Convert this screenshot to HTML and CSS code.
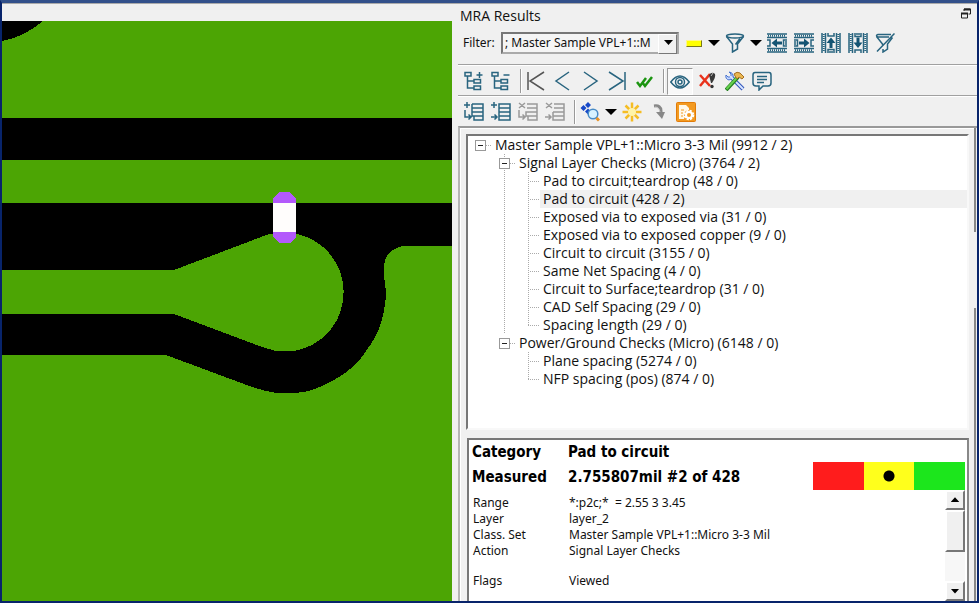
FILE: index.html
```html
<!DOCTYPE html>
<html lang="en">
<head>
<meta charset="utf-8">
<title>MRA Results</title>
<link rel="stylesheet" href="styles.css">
</head>
<body>
<main class="window">
  <section class="viewer" aria-label="Layer view">
    <div class="viewer-head"></div>
    <svg class="board" viewBox="2 21 450 580" preserveAspectRatio="xMinYMin slice" shape-rendering="crispEdges">
      <rect x="2" y="21" width="450" height="580" fill="#4ca504"/>
      <path d="M2 21H43Q24 37 2 41Z"/>
      <rect x="2" y="118" width="450" height="42"/>
      <path d="M2 203H452V246H402Q388 250 385 260Q383 267 384.500 280L386 292Q386 305 381 323Q376 338 366 351Q359 362 350 369Q342 376 330 382Q317 389 304 392Q290 394 277 393Q264 391 252 387L166 355H2Z"/>
      <path d="M2 270H174L265 235.500Q275 232 290 233A59 59 0 0 1 343.500 290A59 59 0 0 1 296 350.500H274L262 347L174 314H2Z" fill="#4ca504"/>
      <path d="M273 203V199L279 192H289L296 199V203ZM273 232H296V237L290 243H279L273 237Z" fill="#b359fb"/>
      <rect x="273" y="203" width="23" height="29" fill="#fffdfc"/>
    </svg>
  </section>

  <section class="panel">
    <header class="titlebar">
      <h1>MRA Results</h1>
      <button class="float" aria-label="Float panel"><svg width="10" height="11" viewBox="0 0 10 11"><path d="M3 3V1H9.500V6H7.500" fill="none" stroke="#222"/><path d="M3 1.500H9.500M0 5.500H7" stroke="#222" stroke-width="2"/><path d="M.5 5V10H6.500V5" fill="none" stroke="#222"/></svg></button>
    </header>

    <div class="toolbar filterbar">
      <label for="filter">Filter:</label>
      <span class="combo"><select id="filter"><option>; Master Sample VPL+1::M</option></select></span>
      <button class="swatch" aria-label="Colour"></button>
      <button class="caret" aria-label="Colour options"></button>
      <button class="tool" aria-label="Filter"><svg class="blue" viewBox="0 0 20 20"><ellipse cx="10" cy="3" rx="8.500" ry="2"/><path d="M1.500 3.500L7.500 11V19L12.500 16V11L18.500 3.500M10.500 11.500L15 5.500"/></svg></button>
      <button class="caret" aria-label="Filter options"></button>
      <button class="tool" aria-label="Previous column"><svg class="blue" viewBox="0 0 20 20"><path d="M0 1H20M0 4.500H20M0 15.500H20M0 19H20"/><path d="M1 2.750H19M1 17.250H19" stroke-width="2" stroke-dasharray="1 1"/><path d="M0 7H3V13H0M20 7H16.500V13H20M18 9H20M18 11H20"/><path class="solid" d="M4.500 10L10 5.500V8.500H15V11.500H10V14.500Z"/></svg></button>
      <button class="tool" aria-label="Next column"><svg class="blue" viewBox="0 0 20 20"><path d="M0 1H20M0 4.500H20M0 15.500H20M0 19H20"/><path d="M1 2.750H19M1 17.250H19" stroke-width="2" stroke-dasharray="1 1"/><path d="M0 7H3.500V13H0M20 7H17V13H20M0 9H2M0 11H2"/><path class="solid" d="M15.500 10L10 5.500V8.500H5V11.500H10V14.500Z"/></svg></button>
      <button class="tool" aria-label="Previous row"><svg class="blue" viewBox="0 0 20 20"><path d="M1 0V20M4.500 0V20M15.500 0V20M19 0V20"/><path d="M2.750 1V19M17.250 1V19" stroke-width="2" stroke-dasharray="1 1"/><path d="M7 0V3H13V0M7 20V16.500H13V20M9 18V20M11 18V20"/><path class="solid" d="M10 4.500L14.500 10H11.500V15H8.500V10H5.500Z"/></svg></button>
      <button class="tool" aria-label="Next row"><svg class="blue" viewBox="0 0 20 20"><path d="M1 0V20M4.500 0V20M15.500 0V20M19 0V20"/><path d="M2.750 1V19M17.250 1V19" stroke-width="2" stroke-dasharray="1 1"/><path d="M7 0V3.500H13V0M7 20V17H13V20M9 0V2M11 0V2"/><path class="solid" d="M10 15L14.500 9.500H11.500V4.500H8.500V9.500H5.500Z"/></svg></button>
      <button class="tool" aria-label="Clear filter"><svg class="blue" viewBox="0 0 20 20"><path d="M16 1.500H3Q0 2.500 3 4H14M1.500 3.500L7.500 11V13M8 16V19L12.500 16V11L17.500 4.500M19.500 .5L2 18.500"/></svg></button>
    </div>

    <div class="toolbar">
      <button class="tool" aria-label="Expand all"><svg class="blue" viewBox="0 0 20 20"><path d="M1 1.500H7V5H1ZM3.500 5V17H10M3.500 10H10M10 8.500H16.500V12H10ZM10 15H16.500V18.500H10Z"/><path d="M15.500 1V7M12.500 4H18.500"/></svg></button>
      <button class="tool" aria-label="Collapse all"><svg class="blue" viewBox="0 0 20 20"><path d="M1 1.500H7V5H1ZM3.500 5V17H10M3.500 10H10M10 8.500H16.500V12H10ZM10 15H16.500V18.500H10ZM12.500 4H18.500"/></svg></button>
      <span class="sep"></span>
      <button class="tool" aria-label="First"><svg class="dark" viewBox="0 0 20 20"><path d="M2 1V19M18 1L4 10L18 19"/></svg></button>
      <button class="tool" aria-label="Previous"><svg class="blue" viewBox="0 0 20 20"><path d="M16 1L3 10L16 19"/></svg></button>
      <button class="tool" aria-label="Next"><svg class="blue" viewBox="0 0 20 20"><path d="M4 1L17 10L4 19"/></svg></button>
      <button class="tool" aria-label="Last"><svg class="blue" viewBox="0 0 20 20"><path d="M2 1L16 10L2 19M18 1V19"/></svg></button>
      <button class="tool" aria-label="Accept"><svg viewBox="0 0 20 20" fill="none" stroke="#1b9410" stroke-width="2.500"><path d="M3 11L6 15L12 7M8 11L11 15L18 6"/></svg></button>
      <span class="sep"></span>
      <button class="tool pressed" aria-label="Show viewed" aria-pressed="true"><svg class="blue" viewBox="0 0 20 20"><path d="M.8 11Q10-1 19.200 11Q10 23 .8 11Z"/><circle cx="10" cy="11" r="4.500"/><circle cx="10" cy="11" r="2"/></svg></button>
      <button class="tool" aria-label="Reject"><svg viewBox="0 0 20 20"><path d="M2 4L12 15M12 3L2 15" stroke="#e9321c" stroke-width="2.500" fill="none"/><path d="M11 4Q14 0 17 3Q18 6 14 12L13 12Z" fill="#383838"/><path d="M13 5L15 2" stroke="#bbb"/><circle cx="14" cy="15.500" r="1.700" fill="#333"/></svg></button>
      <button class="tool" aria-label="Tools"><svg viewBox="0 0 20 20" fill="none"><path d="M5 5L18 18" stroke="#3156bc" stroke-width="4"/><path d="M4 1L6 3V6L3 6L1 4Q0 8 4 9L8 7L8 4Q7 1 4 1Z" fill="#c4d7ff" stroke="#4772cf"/><path d="M5 5L18 18" stroke="#d8e5ff" stroke-width="2"/><path d="M1 19L13 6" stroke="#257f20" stroke-width="4"/><path d="M1.500 18L13 5.500" stroke="#66d14e" stroke-width="2"/><path d="M9 3Q12 0 15 2L19 6L17 8L14 6L12 8L10 5Z" fill="#e9b752" stroke="#a66e22"/></svg></button>
      <button class="tool" aria-label="Comment"><svg class="blue" viewBox="0 0 20 20"><path d="M3 1.500H17Q19 1.500 19 4V12Q19 15 16 15H11L7 19V15H4Q1 15 1 12V4Q1 1.500 3 1.500ZM5 5.500H15M5 8.500H15M5 11.500H12"/></svg></button>
    </div>

    <div class="toolbar">
      <button class="tool" aria-label="Add group"><svg class="blue" viewBox="0 0 20 20"><path d="M3 0V6M0 3H6M1 8V15H7M4.500 12.500L7 15L4.500 17.500M8 2H19V18H10V14H8V10H19M8 2V10M8 6H19M10 14H19"/></svg></button>
      <button class="tool" aria-label="Add row"><svg class="blue" viewBox="0 0 20 20"><path d="M3 0V6M0 3H6M0 15H6M3.500 12.500L6 15L3.500 17.500M8 2H19V18H8ZM8 6H19M8 10H19M8 14H19"/></svg></button>
      <button class="tool" aria-label="Remove group" disabled><svg class="gray" viewBox="0 0 20 20"><path d="M1 1L7 6M7 1L1 6M1 8V15H7M4.500 12.500L7 15L4.500 17.500M9 2H19V18H10V14H8V10H19M9 6H19M10 14H19"/></svg></button>
      <button class="tool" aria-label="Remove row" disabled><svg class="gray" viewBox="0 0 20 20"><path d="M1 1L7 6M7 1L1 6M0 15H6M3.500 12.500L6 15L3.500 17.500M9 2H19V18H8V10M9 6H19M8 10H19M8 14H19"/></svg></button>
      <span class="sep"></span>
      <button class="tool" aria-label="Locate"><svg viewBox="0 0 20 20"><path d="M3.500 3L6.500 6L3.500 9L.5 6ZM8 0L11 3L8 6L5 3ZM8 6.500L11 9.500L8 12.500L5 9.500Z" fill="#1749c8"/><circle cx="13" cy="12" r="4.800" fill="#d7f2ff" stroke="#488bc6" stroke-width="1.500"/><path d="M16.500 16L19 18.500" stroke="#e79122" stroke-width="3"/></svg></button>
      <button class="caret" aria-label="Locate options"></button>
      <button class="tool" aria-label="Highlight"><svg viewBox="0 0 20 20"><path d="M10 .5V19.500M.5 10H19.500M3.500 3.500L16.500 16.500M16.500 3.500L3.500 16.500" stroke="#f5bd24" stroke-width="2.500"/><circle cx="10" cy="10" r="4" fill="#fff4a8"/></svg></button>
      <button class="tool" aria-label="Step" disabled><svg viewBox="0 0 20 20"><path d="M5 4Q12 3 12 9V11" fill="none" stroke="#888" stroke-width="3"/><path d="M6 5Q10 5 11 10" fill="none" stroke="#ccc"/><path d="M7 10H16L13 17Z" fill="#888"/></svg></button>
      <button class="tool" aria-label="Report settings"><svg viewBox="0 0 20 20"><rect x=".5" y=".5" width="19" height="19" rx="1" fill="#f39a21" stroke="#e17b08"/><path d="M3 3H10L13 6V8H11L8 11V17H3Z" fill="#fff8e8"/><path d="M5 8H8M5 11H7M5 14H7" stroke="#f39a21"/><circle cx="13" cy="13" r="4.300" fill="none" stroke="#fff" stroke-width="2" stroke-dasharray="2.200 1.180"/><circle cx="13" cy="13" r="3" fill="#f39a21" stroke="#fff" stroke-width="2"/></svg></button>
    </div>

    <div class="frame">
      <div class="stack">
        <nav class="tree" aria-label="Results">
          <ul>
            <li>
              <div class="node"><button class="toggle" aria-label="Collapse"></button><span>Master Sample VPL+1::Micro 3-3 Mil (9912 / 2)</span></div>
              <ul class="groups">
                <li class="linked">
                  <div class="node"><button class="toggle" aria-label="Collapse"></button><span>Signal Layer Checks (Micro) (3764 / 2)</span></div>
                  <ul class="leaves">
                    <li><span>Pad to circuit;teardrop (48 / 0)</span></li>
                    <li><span class="selected">Pad to circuit (428 / 2)</span></li>
                    <li><span>Exposed via to exposed via (31 / 0)</span></li>
                    <li><span>Exposed via to exposed copper (9 / 0)</span></li>
                    <li><span>Circuit to circuit (3155 / 0)</span></li>
                    <li><span>Same Net Spacing (4 / 0)</span></li>
                    <li><span>Circuit to Surface;teardrop (31 / 0)</span></li>
                    <li><span>CAD Self Spacing (29 / 0)</span></li>
                    <li><span>Spacing length (29 / 0)</span></li>
                  </ul>
                </li>
                <li>
                  <div class="node"><button class="toggle" aria-label="Collapse"></button><span>Power/Ground Checks (Micro) (6148 / 0)</span></div>
                  <ul class="leaves">
                    <li><span>Plane spacing (5274 / 0)</span></li>
                    <li><span>NFP spacing (pos) (874 / 0)</span></li>
                  </ul>
                </li>
              </ul>
            </li>
          </ul>
        </nav>

        <section class="details" aria-label="Details">
          <div class="summary">
            <table>
              <tr><th>Category</th><td>Pad to circuit</td></tr>
              <tr><th>Measured</th><td>2.755807mil #2 of 428</td></tr>
            </table>
            <div class="levels"><i class="red"></i><i class="yellow"></i><i class="green"></i></div>
          </div>
          <div class="facts">
            <table>
              <tr><th>Range</th><td>*:p2c;*&nbsp; = 2.55 3 3.45</td></tr>
              <tr><th>Layer</th><td>layer_2</td></tr>
              <tr><th>Class. Set</th><td>Master Sample VPL+1::Micro 3-3 Mil</td></tr>
              <tr><th>Action</th><td>Signal Layer Checks</td></tr>
              <tr class="spaced"><th>Flags</th><td>Viewed</td></tr>
            </table>
            <div class="scroll">
              <button class="up" aria-label="Scroll up"></button>
              <span class="thumb"></span>
              <button class="down" aria-label="Scroll down"></button>
            </div>
          </div>
        </section>
      </div>
      <div class="rail"><i></i><i></i></div>
    </div>
  </section>
</main>
</body>
</html>
```
FILE: styles.css
```css
* { box-sizing: border-box; }
body { margin: 0; color: #111; font: 12px/16px "Noto Sans", sans-serif; }
ul { list-style: none; margin: 0; padding: 0; }
button { padding: 0; border: 0; background: none; flex: none; }
table { border-collapse: collapse; }
th, td { padding: 0; text-align: left; white-space: pre; }

.window {
  display: grid;
  grid-template-columns: 450fr 525fr;
  height: 100vh;
  border: 2px solid #08246b;
  border-top: 3px solid #32508a;
  background: #f0f0f0;
  overflow: hidden;
}
.viewer { display: flex; flex-direction: column; min-width: 0; min-height: 0; }
.viewer-head { height: 18px; flex: none; border-top: 1px solid #aaa; }
.board { display: block; width: 100%; flex: 1; min-height: 0; }

.panel { display: flex; flex-direction: column; min-width: 0; min-height: 0; padding-left: 6px; border-top: 1px solid #aaa; }
.titlebar { display: flex; justify-content: space-between; align-items: center; height: 23px; flex: none; padding: 0 6px 0 2px; }
.titlebar h1 { margin: 0; font: 14px/20px "Open Sans", sans-serif; }
.float { display: flex; height: 16px; }

.toolbar { display: flex; align-items: center; gap: 3px; height: 31px; flex: none; padding: 2px 0 0 4px; border-top: 1px solid #a0a0a0; box-shadow: inset 0 1px #fff; }
.filterbar { height: 37px; padding: 0 0 5px 5px; border-top: 0; box-shadow: none; }
.filterbar label { width: 35px; }
.tool { display: grid; place-items: center; width: 24px; height: 26px; }
.tool svg { width: 20px; height: 20px; }
.pressed { height: 27px; width: 26px; border: 1px solid #999; border-color: #999 #fff #fff #999; background: #f8f8f8; }
.blue { fill: none; stroke: #28647f; stroke-width: 1.500; }
.dark { fill: none; stroke: #555; stroke-width: 1.500; }
.gray { fill: none; stroke: #999; stroke-width: 1.500; }
.solid { fill: #145473; stroke: none; }
.sep { width: 2px; height: 24px; margin: 0 -1px 0 4px; border-left: 1px solid #999; border-right: 1px solid #fff; }
.caret { width: 12px; height: 6px; background: #000; clip-path: polygon(0 0, 100% 0, 50% 100%); }
.swatch { width: 16px; height: 7px; margin: 0 3px 0 4px; background: #ff0; border: 1px solid #8a8a20; border-color: #fff68a #77771c #77771c #fff68a; }

.combo { display: flex; position: relative; width: 178px; height: 22px; border: 2px solid #777; border-color: #777 #aaa #aaa #777; background: #fff; }
.combo select { appearance: none; width: 100%; padding: 0 18px 0 2px; border: 0; background: #f5f5f5; color: #111; font: inherit; }
.combo::before { content: ""; position: absolute; top: 0; right: 0; width: 17px; height: 18px; background: #f0f0f0; border: 1px solid #fff; border-right-color: #777; border-bottom-color: #777; pointer-events: none; }
.combo::after { content: ""; position: absolute; top: 6px; right: 4px; width: 9px; height: 5px; background: #000; clip-path: polygon(0 0, 100% 0, 50% 100%); pointer-events: none; }

.frame { display: flex; flex: 1; min-height: 0; border-top: 2px solid #999; border-left: 2px solid #b5b5b5; }
.stack { display: flex; flex-direction: column; flex: 1; min-width: 0; gap: 8px; padding: 6px 5px 0 6px; box-shadow: inset 1px 1px #fff; }
.rail { display: flex; flex-direction: column; justify-content: space-between; width: 3px; }
.rail i { width: 2px; background: #888; height: 22%; }
.rail i + i { height: 62%; }

.tree { flex: 295; min-height: 0; overflow: hidden; border: 2px solid #777; border-right-color: #f8f8f8; border-bottom-color: #f8f8f8; background: #fff; font: 14px/18px "Open Sans", sans-serif; white-space: nowrap; }
.tree > ul { padding: 0 0 0 7px; }
.node { display: flex; align-items: center; height: 18px; }
.node::after { content: ""; order: 1; width: 5px; height: 1px; background: repeating-linear-gradient(90deg, #aaa 0 1px, #fff 1px 2px); }
.node span { order: 2; padding-left: 4px; }
.toggle { width: 11px; height: 11px; border: 1px solid #999; background: linear-gradient(#222, #222) center / 5px 1px no-repeat #fff; }
.groups { padding-left: 24px; }
.linked { background: repeating-linear-gradient(#aaa 0 1px, #fff 1px 2px) 5px 0 / 1px 100% no-repeat; }
.leaves { padding-left: 29px; }
.leaves li { display: flex; height: 18px; }
.leaves li::before { content: ""; width: 12px; background: repeating-linear-gradient(#aaa 0 1px, #fff 1px 2px) 0 0 / 1px 100% no-repeat, repeating-linear-gradient(90deg, #aaa 0 1px, #fff 1px 2px) 0 9px / 12px 1px no-repeat; }
.leaves li:last-child::before { background-size: 1px 9px, 12px 1px; }
.leaves span { flex: 1; padding-left: 3px; }
.selected { background: #f0f0f0; }

.details { display: flex; flex-direction: column; flex: 163; min-height: 0; margin-left: 1px; border: 2px solid #777; border-right-color: #888; border-bottom: 0; background: #fff; padding-right: 2px; overflow: hidden; }
.summary { display: flex; justify-content: space-between; align-items: flex-end; height: 50px; flex: none; }
.summary table { font: bold 15px/25px "DejaVu Sans Condensed", "Noto Sans", sans-serif; color: #000; }
.summary th { width: 99px; padding-left: 3px; }
.levels { display: flex; height: 28px; width: 152px; }
.levels i { flex: 1; }
.red { background: #ff1c1c; }
.yellow { background: radial-gradient(circle, #000 5px, #ffff1c 6px); }
.green { background: #1ce61c; }
.facts { display: flex; justify-content: space-between; flex: 1; min-height: 0; }
.facts table { align-self: flex-start; margin-top: 5px; font-weight: normal; }
.facts tr { height: 16px; }
.facts th { width: 100px; padding-left: 4px; font-weight: normal; }
.facts .spaced > * { padding-top: 14px; }
.scroll { display: flex; flex-direction: column; width: 20px; background: #f7f7f7; }
.scroll button, .thumb { border: 2px solid #777; border-top-color: #fff; border-left-color: #fff; background: #f0f0f0; }
.scroll button { display: grid; place-items: center; height: 20px; width: 20px; }
.scroll button::before { content: ""; width: 9px; height: 5px; background: #000; clip-path: polygon(0 0, 100% 0, 50% 100%); }
.scroll .up::before { clip-path: polygon(50% 0, 100% 100%, 0 100%); }
.thumb { height: 42px; }
.scroll .down { margin-top: auto; }
```
